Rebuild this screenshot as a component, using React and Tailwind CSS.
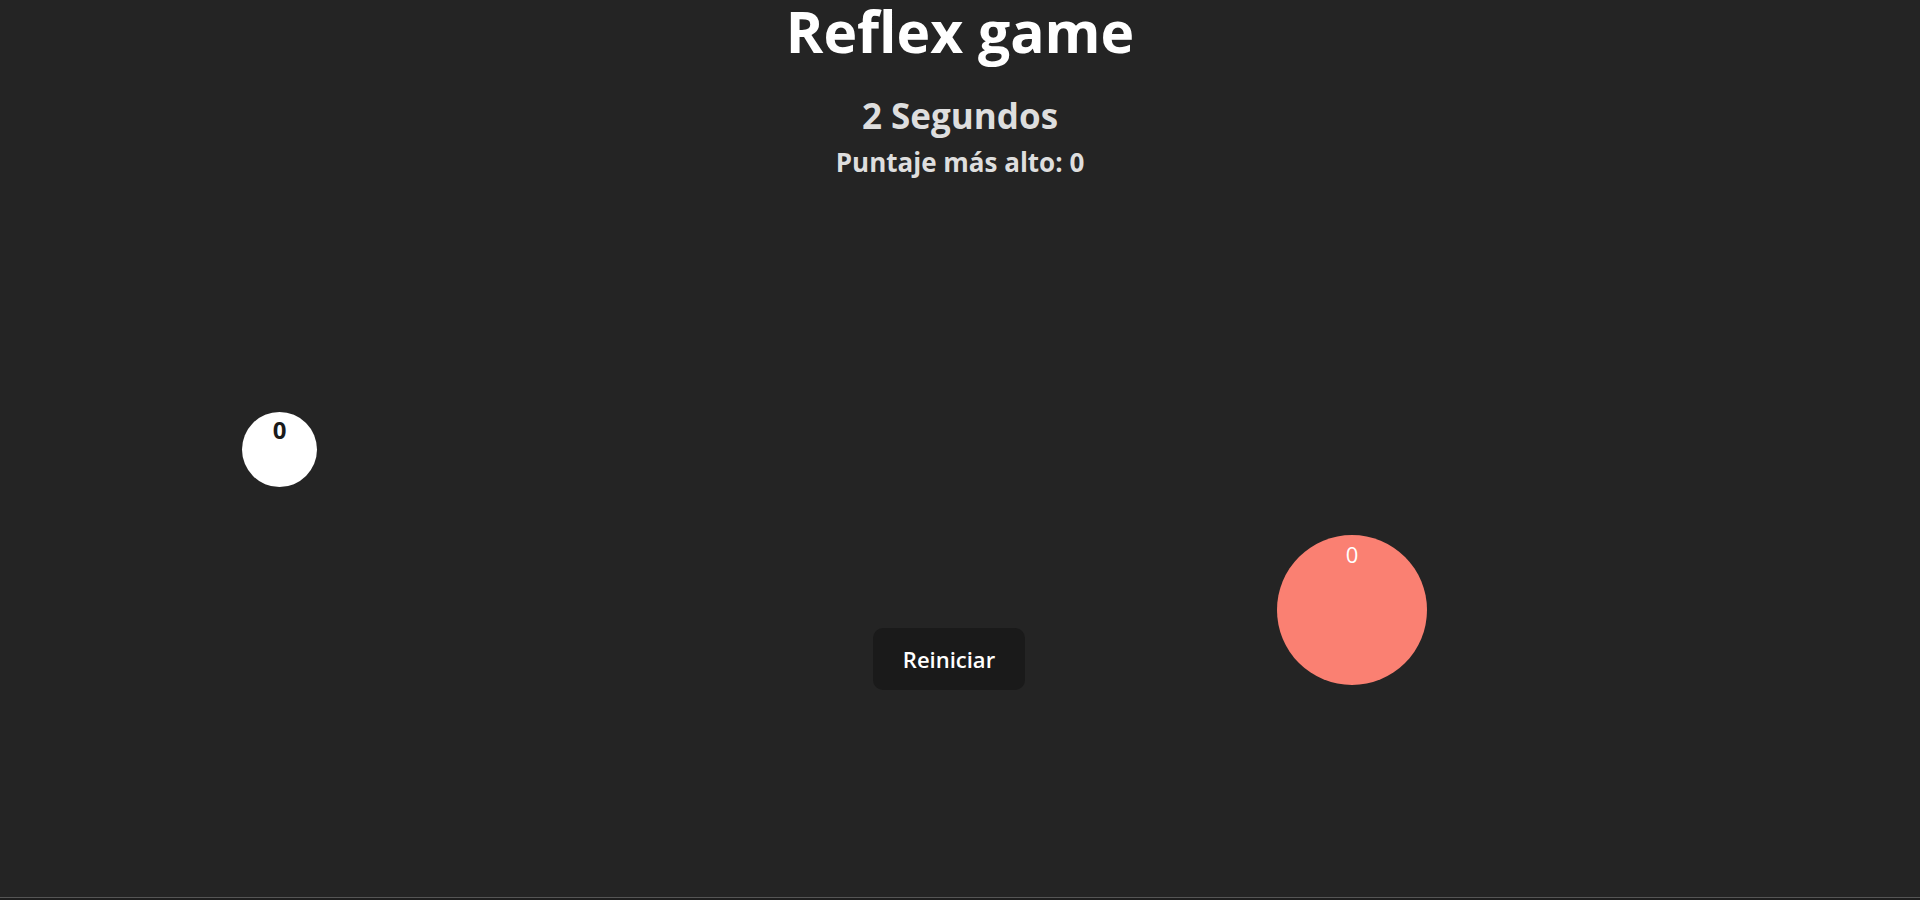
import React, { useState } from "react";

const App = () => {
  const [seconds] = useState(2);
  const [best] = useState(0);
  const [targets] = useState([
    { id: 1, x: 242, y: 230, size: 75, score: 0, kind: "player" },
    { id: 2, x: 1277, y: 353, size: 150, score: 0, kind: "enemy" },
  ]);

  return (
    <div className="min-h-[900px] bg-[#242424] text-center font-['Open_Sans',sans-serif] flex flex-col">
      <h1 className="text-[57px] font-bold leading-[62px] text-white">
        Reflex game
      </h1>
      <h2 className="mt-[28px] text-[35px] font-bold leading-[52px] text-[#dedede]">
        {seconds} Segundos
      </h2>
      <h3 className="mt-[1px] text-[26px] font-bold leading-[39px] text-[#dedede]">
        Puntaje más alto: {best}
      </h3>

      <div className="relative flex-1 flex flex-col items-center">
        {targets.map((t) =>
          t.kind === "player" ? (
            <div
              key={t.id}
              className="absolute rounded-full bg-white text-[#1a1a1a] text-[24px] font-bold leading-[36px]"
              style={{ left: t.x, top: t.y, width: t.size, height: t.size }}
            >
              {t.score}
            </div>
          ) : (
            <div
              key={t.id}
              className="absolute rounded-full bg-[#fa8072] text-white text-[22px] leading-[38px]"
              style={{ left: t.x, top: t.y, width: t.size, height: t.size }}
            >
              {t.score}
            </div>
          )
        )}

        <button className="mt-[446px] mr-[22px] h-[62px] w-[152px] rounded-[10px] bg-[#1a1a1a] text-[22px] font-semibold text-white">
          Reiniciar
        </button>
      </div>

      <div className="mt-auto h-px bg-[#555555]" />
      <div className="h-[2px] bg-[#1e1e1e]" />
    </div>
  );
};

export default App;
